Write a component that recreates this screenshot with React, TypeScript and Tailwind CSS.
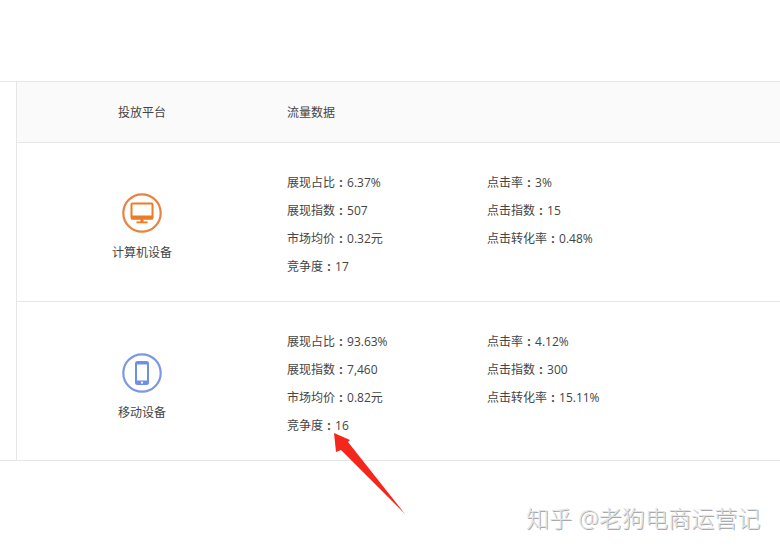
const font = "font-['Open_Sans','Noto_Sans_CJK_SC',sans-serif]";

function DesktopIcon() {
  return (
    <svg width="40" height="40" viewBox="0 0 40 40" fill="none">
      <circle cx="20" cy="20" r="18.7" stroke="#e8833f" strokeWidth="2.2" />
      <rect x="9.5" y="10.5" width="21" height="15" rx="1" stroke="#ee7a22" strokeWidth="2" fill="none" />
      <rect x="9" y="22.5" width="22" height="4" fill="#ee7a22" />
      <rect x="18.5" y="26" width="3" height="3" fill="#ee7a22" />
      <rect x="14.5" y="28.5" width="11" height="1.8" fill="#ee7a22" />
    </svg>
  );
}

function PhoneIcon() {
  return (
    <svg width="40" height="40" viewBox="0 0 40 40" fill="none">
      <circle cx="20" cy="20" r="18.7" stroke="#7d97e3" strokeWidth="2.2" />
      <rect x="13" y="8" width="14" height="24" rx="2.5" fill="#6f8ee6" />
      <rect x="15" y="11.5" width="10" height="16" fill="#fff" />
      <circle cx="20" cy="29.7" r="1.1" fill="#fff" />
    </svg>
  );
}

function Stat({ name, value }: { name: string; value: string }) {
  return (
    <div className="h-[28px] leading-[28px] whitespace-nowrap">
      {name}
      <span className="inline-block w-[12px] text-center font-bold">:</span>
      {value}
    </div>
  );
}

type Pair = [string, string];

function Row({ icon, label, left, right, last }: { icon: React.ReactNode; label: string; left: Pair[]; right: Pair[]; last?: boolean }) {
  return (
    <div className={`flex ${last ? 'h-[158px]' : 'h-[159px] border-b border-[#e6e6e6]'}`}>
      <div className={`w-[250px] flex flex-col items-center ${last ? 'pt-[51px]' : 'pt-[50px]'}`}>
        {icon}
        <div className="mt-[10px] leading-[20px]">{label}</div>
      </div>
      <div className="pl-[20px] w-[220px] pt-[26px]">
        {left.map(([n, v]) => <Stat key={n} name={n} value={v} />)}
      </div>
      <div className="pt-[26px]">
        {right.map(([n, v]) => <Stat key={n} name={n} value={v} />)}
      </div>
    </div>
  );
}

export default function App() {
  return (
    <div className={`relative w-[780px] h-[551px] bg-white overflow-hidden text-[12px] text-[#444] ${font}`}>
      <div className="pt-[81px]">
        <div className="border-t border-b border-[#e6e6e6]">
          <div className="ml-[16px] border-l border-[#e6e6e6]">
            <div className="flex h-[61px] items-center bg-[#fafafa] border-b border-[#e6e6e6] pt-[2px]">
              <div className="w-[250px] text-center">投放平台</div>
              <div className="pl-[20px]">流量数据</div>
            </div>
            <Row
              icon={<DesktopIcon />}
              label="计算机设备"
              left={[['展现占比', '6.37%'], ['展现指数', '507'], ['市场均价', '0.32元'], ['竞争度', '17']]}
              right={[['点击率', '3%'], ['点击指数', '15'], ['点击转化率', '0.48%']]}
            />
            <Row
              last
              icon={<PhoneIcon />}
              label="移动设备"
              left={[['展现占比', '93.63%'], ['展现指数', '7,460'], ['市场均价', '0.82元'], ['竞争度', '16']]}
              right={[['点击率', '4.12%'], ['点击指数', '300'], ['点击转化率', '15.11%']]}
            />
          </div>
        </div>
      </div>

      {/* red arrow drawn on top of the screenshot */}
      <svg className="absolute left-[330px] top-[428px]" width="80" height="90" viewBox="0 0 80 90">
        <path d="M4 5 L20 12 L18 14 L75 86 L11 22 L6 24 Z" fill="#f5271c" />
      </svg>

      {/* watermark */}
      <div className="absolute left-[526px] top-[502px] text-[23px] font-light leading-[32px] tracking-[0.1px] text-[#e4e4e4] whitespace-nowrap [text-shadow:1px_1px_0_#aaaaaa]">
        知乎 @老狗电商运营记
      </div>
    </div>
  );
}
